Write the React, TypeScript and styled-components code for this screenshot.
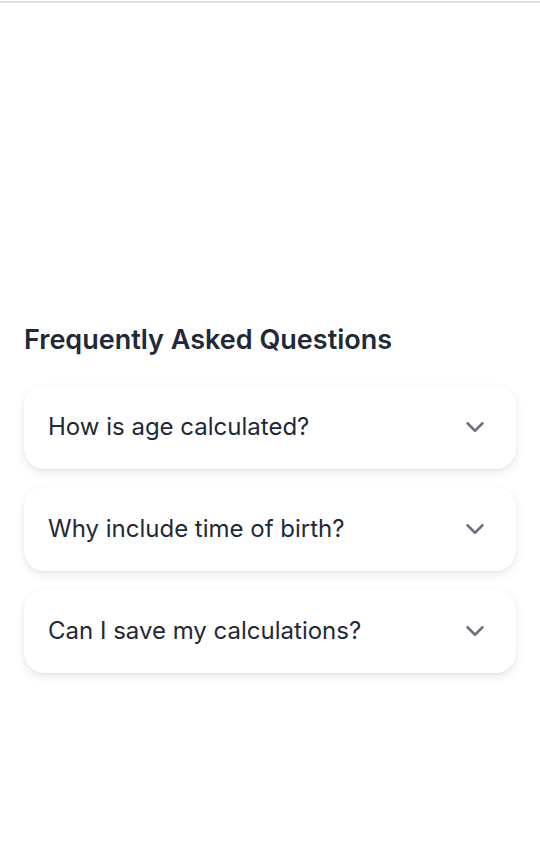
import React from "react";
import styled, { createGlobalStyle } from "styled-components";

const Global = createGlobalStyle`
  html, body { margin: 0; padding: 0; background: #ffffff; }
  body { font-family: Inter, "Noto Sans", sans-serif; color: #1f2937; }
`;

const Page = styled.div`
  width: 540px;
  min-height: 841px;
  display: flex;
  flex-direction: column;
`;

const TopRule = styled.div`
  margin-top: 1px;
  height: 2px;
  background: #e0e0e0;
`;

const Spacer = styled.div`
  height: 317px;
`;

const Section = styled.section`
  padding: 0 24px;
  display: flex;
  flex-direction: column;
`;

const Title = styled.h2`
  margin: 0 0 25px;
  font-size: 27px;
  line-height: 40px;
  font-weight: 600;
  color: #1f2937;
`;

const List = styled.div`
  display: flex;
  flex-direction: column;
  gap: 18px;
`;

const Item = styled.button`
  all: unset;
  box-sizing: border-box;
  display: flex;
  align-items: center;
  justify-content: space-between;
  height: 84px;
  padding: 0 24px;
  background: #ffffff;
  border-radius: 20px;
  box-shadow: 0 4px 10px rgba(0, 0, 0, 0.08), 0 1px 3px rgba(0, 0, 0, 0.05);
  cursor: pointer;
`;

const Question = styled.span`
  font-size: 24px;
  line-height: 36px;
  font-weight: 400;
  color: #1f2937;
`;

const Chevron = styled.svg`
  width: 30px;
  height: 30px;
  flex: none;
  margin-right: 2px;
  color: #6b7280;
`;

const questions = [
  "How is age calculated?",
  "Why include time of birth?",
  "Can I save my calculations?",
];

export default function App() {
  return (
    <Page>
      <Global />
      <TopRule />
      <Spacer />
      <Section>
        <Title>Frequently Asked Questions</Title>
        <List>
          {questions.map((q) => (
            <Item key={q}>
              <Question>{q}</Question>
              <Chevron viewBox="0 0 24 24" fill="none" stroke="currentColor" strokeWidth={2} strokeLinecap="round" strokeLinejoin="round">
                <path d="m6 9 6 6 6-6" />
              </Chevron>
            </Item>
          ))}
        </List>
      </Section>
    </Page>
  );
}
